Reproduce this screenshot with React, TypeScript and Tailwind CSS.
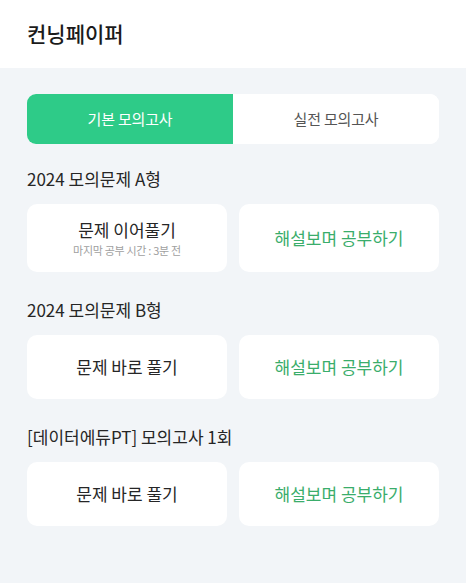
import React, { useState } from 'react';

type Action = {
  label: string;
  sub?: string;
};

type Section = {
  title: string;
  primary: Action;
};

const sections: Section[] = [
  { title: '2024 모의문제 A형', primary: { label: '문제 이어풀기', sub: '마지막 공부 시간 : 3분 전' } },
  { title: '2024 모의문제 B형', primary: { label: '문제 바로 풀기' } },
  { title: '[데이터에듀PT] 모의고사 1회', primary: { label: '문제 바로 풀기' } },
];

const font = { fontFamily: '"Noto Sans CJK KR", "Noto Sans", sans-serif' };

export default function App() {
  const [tab, setTab] = useState<'basic' | 'real'>('basic');

  return (
    <div className="min-h-[583px] w-full bg-[#f2f5f8]" style={font}>
      {/* Header */}
      <header className="flex h-[68px] items-center bg-white px-[27px]">
        <h1 className="text-[21px] font-medium text-[#1b1b1b]">컨닝페이퍼</h1>
      </header>

      <main className="px-[27px] pt-[26px]">
        {/* Tabs */}
        <div className="flex h-[50px] overflow-hidden rounded-[9px] bg-white">
          <button
            onClick={() => setTab('basic')}
            className={`flex-1 text-[15px] tracking-[-0.2px] ${
              tab === 'basic' ? 'bg-[#2ecb88] text-white' : 'bg-white text-[#555]'
            }`}
          >
            기본 모의고사
          </button>
          <button
            onClick={() => setTab('real')}
            className={`flex-1 text-[15px] tracking-[-0.2px] ${
              tab === 'real' ? 'bg-[#2ecb88] text-white' : 'bg-white text-[#555]'
            }`}
          >
            실전 모의고사
          </button>
        </div>

        {/* Exam sections */}
        {sections.map((s, i) => (
          <section key={s.title} className={i === 0 ? 'mt-[22px]' : 'mt-[25px]'}>
            <h2 className="mb-3 text-[17px] leading-[26px] text-[#262626]">{s.title}</h2>
            <div className="grid grid-cols-2 gap-3">
              <button
                className={`flex flex-col items-center justify-center rounded-[10px] bg-white ${
                  s.primary.sub ? 'h-[68px]' : 'h-[64px]'
                }`}
              >
                <span className="text-[17px] leading-[22px] text-[#262626]">{s.primary.label}</span>
                {s.primary.sub && (
                  <span className="mt-[2px] text-[11px] leading-[14px] tracking-[-0.3px] text-[#a0a0a0]">
                    {s.primary.sub}
                  </span>
                )}
              </button>
              <button
                className={`flex items-center justify-center rounded-[10px] bg-white text-[17px] text-[#3aad6b] ${
                  s.primary.sub ? 'h-[68px]' : 'h-[64px]'
                }`}
              >
                해설보며 공부하기
              </button>
            </div>
          </section>
        ))}
      </main>
    </div>
  );
}
